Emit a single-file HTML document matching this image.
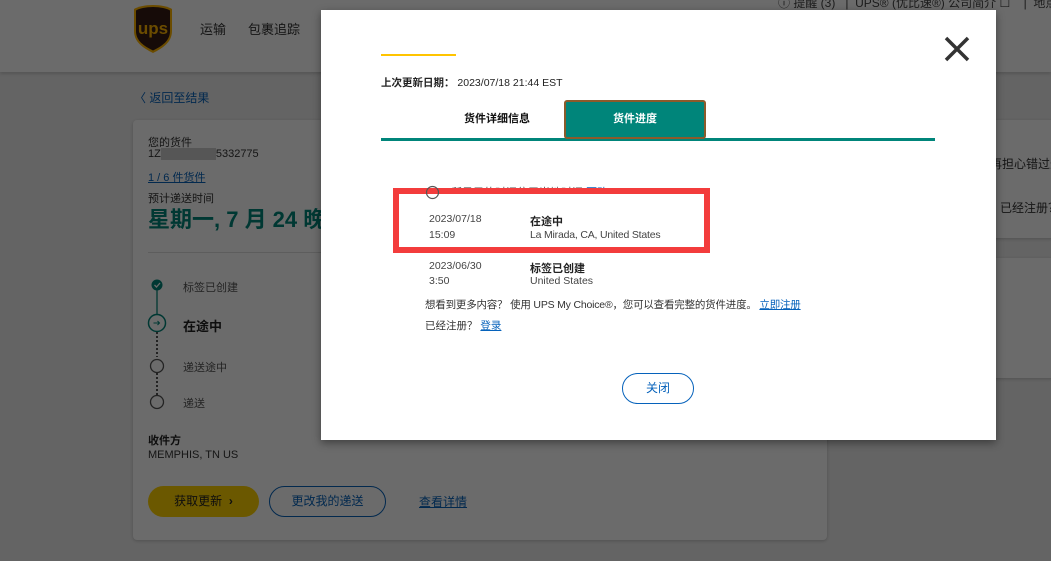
<!DOCTYPE html>
<html><head><meta charset="utf-8">
<style>
*{margin:0;padding:0;box-sizing:border-box}
body{width:1051px;height:561px;overflow:hidden;background:#eeeeee;font-family:"Liberation Sans","Noto Sans CJK SC",sans-serif;position:relative;color:#222}
.a{position:absolute;white-space:nowrap}
.hdr{left:0;top:0;width:1051px;height:72px;background:#ffffff;box-shadow:0 2px 3px rgba(0,0,0,.15)}
.card{background:#ffffff;border-radius:4px;box-shadow:0 1px 3px rgba(0,0,0,.2)}
.modal{left:321px;top:10px;width:675px;height:430px;background:#fff;box-shadow:0 3px 8px rgba(0,0,0,.4)}
</style></head><body>
<div class="a hdr"></div>
<svg class="a" style="left:133px;top:4px" width="40" height="50" viewBox="0 0 40 50"><path d="M20 1C12 1 5 2.5 1 5v22c0 11 9 17 19 22 10-5 19-11 19-22V5C35 2.5 28 1 20 1z" fill="#ffb500"/><path d="M20 3C13 3 6 4.5 3 6.5v20.5c0 10 8 15 17 19.5 9-4.5 17-9.5 17-19.5V6.5C34 4.5 27 3 20 3z" fill="#351c15"/><text x="20" y="30" font-size="17" font-weight="bold" fill="#ffb500" text-anchor="middle" font-family="Liberation Sans">ups</text></svg>
<div class="a" style="left:200px;top:19px;font-size:13px;color:#333">运输</div>
<div class="a" style="left:248px;top:19px;font-size:13px;color:#333">包裹追踪</div>
<div class="a" style="left:778px;top:-6px;font-size:12px;color:#444">ⓘ 提醒 (3) &nbsp;&nbsp;| &nbsp;UPS® (优比速®) 公司简介 ☐ &nbsp;&nbsp;&nbsp;| &nbsp;地点</div>
<div class="a" style="left:134px;top:89px;font-size:12px;color:#0662bb">〈 返回至结果</div>
<div class="a card" style="left:133px;top:120px;width:694px;height:420px"></div>
<div class="a card" style="left:855px;top:120px;width:200px;height:118px"></div>
<div class="a card" style="left:855px;top:258px;width:200px;height:120px"></div>
<div class="a" style="left:990px;top:155px;font-size:12px;color:#333">再担心错过递</div>
<div class="a" style="left:1000px;top:199px;font-size:12px;color:#333">已经注册？</div>
<div class="a" style="left:148px;top:134px;font-size:11px;color:#333">您的货件</div>
<div class="a" style="left:148px;top:148px;font-size:11px;color:#333">1Z<span style="display:inline-block;width:55px;height:12px;background:#ccc;vertical-align:middle"></span>5332775</div>
<div class="a" style="left:148px;top:169px;font-size:11px;color:#0662bb;text-decoration:underline">1 / 6 件货件</div>
<div class="a" style="left:148px;top:190px;font-size:11px;color:#333">预计递送时间</div>
<div class="a" style="left:148px;top:202px;font-size:22px;font-weight:bold;color:#00857a">星期一, 7 月 24 晚</div>
<div class="a" style="left:148px;top:252px;width:180px;height:1px;background:#ddd"></div>
<svg class="a" style="left:145px;top:275px" width="25" height="140"><circle cx="12" cy="10" r="5.5" fill="#00857a"/><path d="M9.5 10l2 2 3.5-4" stroke="#fff" stroke-width="1.3" fill="none"/><line x1="12" y1="15" x2="12" y2="40" stroke="#00857a" stroke-width="1.3"/><circle cx="12" cy="48" r="8.5" fill="none" stroke="#00857a" stroke-width="1.5"/><path d="M8.5 48h6m-2-2l2 2-2 2" stroke="#00857a" stroke-width="1" fill="none"/><line x1="12" y1="57" x2="12" y2="82" stroke="#555" stroke-width="2" stroke-dasharray="2 2"/><circle cx="12" cy="91" r="6.5" fill="none" stroke="#555" stroke-width="1.3"/><line x1="12" y1="98" x2="12" y2="120" stroke="#555" stroke-width="2" stroke-dasharray="2 2"/><circle cx="12" cy="127" r="6.5" fill="none" stroke="#555" stroke-width="1.3"/></svg>
<div class="a" style="left:183px;top:279px;font-size:11px;color:#555">标签已创建</div>
<div class="a" style="left:183px;top:316px;font-size:13px;font-weight:bold;color:#222">在途中</div>
<div class="a" style="left:183px;top:359px;font-size:11px;color:#555">递送途中</div>
<div class="a" style="left:183px;top:395px;font-size:11px;color:#555">递送</div>
<div class="a" style="left:148px;top:432px;font-size:11px;font-weight:bold;color:#222">收件方</div>
<div class="a" style="left:148px;top:449px;font-size:11px;color:#333">MEMPHIS, TN US</div>
<div class="a" style="left:148px;top:486px;width:111px;height:31px;border-radius:16px;background:#ffd100;font-size:12px;line-height:31px;text-align:center;color:#222">获取更新 &nbsp;<b>›</b></div>
<div class="a" style="left:269px;top:486px;width:117px;height:31px;border-radius:16px;border:1px solid #0662bb;font-size:12px;line-height:29px;text-align:center;color:#0662bb">更改我的递送</div>
<div class="a" style="left:419px;top:493px;font-size:12px;color:#0662bb;text-decoration:underline">查看详情</div>

<svg class="a" style="left:0;top:0" width="1051" height="561"><rect x="0" y="0" width="1051" height="561" fill="#000000" fill-opacity="0.58"/></svg>
<div class="a modal"></div>
<svg class="a" style="left:943px;top:36px" width="28" height="26"><path d="M3 2L25 24M25 2L3 24" stroke="#333" stroke-width="3.5"/></svg>
<div class="a" style="left:381px;top:54px;width:75px;height:2px;background:#ffc400"></div>
<div class="a" style="left:381px;top:75px;font-size:10.5px;color:#222"><b>上次更新日期：</b> 2023/07/18 21:44 EST</div>
<div class="a" style="left:464px;top:110px;font-size:11px;font-weight:bold;color:#111">货件详细信息</div>
<div class="a" style="left:381px;top:138px;width:554px;height:3px;background:#00857a"></div>
<div class="a" style="left:564px;top:100px;width:142px;height:39px;background:#00857a;border:2px solid #8b5a2b;border-radius:3px;color:#fff;font-size:11px;font-weight:bold;text-align:center;line-height:35px">货件进度</div>
<div class="a" style="left:451px;top:184px;font-size:11px;color:#555">所显示的时间位于当地时间 <span style="color:#0662bb;text-decoration:underline">更改</span></div>
<div class="a" style="left:393px;top:188px;width:317px;height:65px;border:6px solid #f33c3c;background:#fff"></div>
<svg class="a" style="left:425px;top:185px" width="16" height="16"><circle cx="7.5" cy="7.5" r="6" fill="none" stroke="#555" stroke-width="1.2"/></svg>
<div class="a" style="left:429px;top:213px;font-size:10.5px;color:#444">2023/07/18</div>
<div class="a" style="left:429px;top:229px;font-size:10.5px;color:#444">15:09</div>
<div class="a" style="left:530px;top:213px;font-size:11px;font-weight:bold;color:#222">在途中</div>
<div class="a" style="left:530px;top:229px;font-size:10.5px;color:#444;letter-spacing:-.2px">La Mirada, CA, United States</div>
<div class="a" style="left:429px;top:260px;font-size:10.5px;color:#444">2023/06/30</div>
<div class="a" style="left:429px;top:275px;font-size:10.5px;color:#444">3:50</div>
<div class="a" style="left:530px;top:260px;font-size:11px;font-weight:bold;color:#222">标签已创建</div>
<div class="a" style="left:530px;top:275px;font-size:10.5px;color:#444">United States</div>
<div class="a" style="left:425px;top:297px;font-size:10.5px;color:#333;letter-spacing:-.2px">想看到更多内容？ 使用 UPS My Choice®，您可以查看完整的货件进度。 <span style="color:#0662bb;text-decoration:underline">立即注册</span></div>
<div class="a" style="left:425px;top:318px;font-size:10.5px;color:#333">已经注册？ <span style="color:#0662bb;text-decoration:underline">登录</span></div>
<div class="a" style="left:622px;top:373px;width:72px;height:31px;border:1px solid #0662bb;border-radius:16px;font-size:12px;color:#0662bb;text-align:center;line-height:29px">关闭</div>
</body></html>
